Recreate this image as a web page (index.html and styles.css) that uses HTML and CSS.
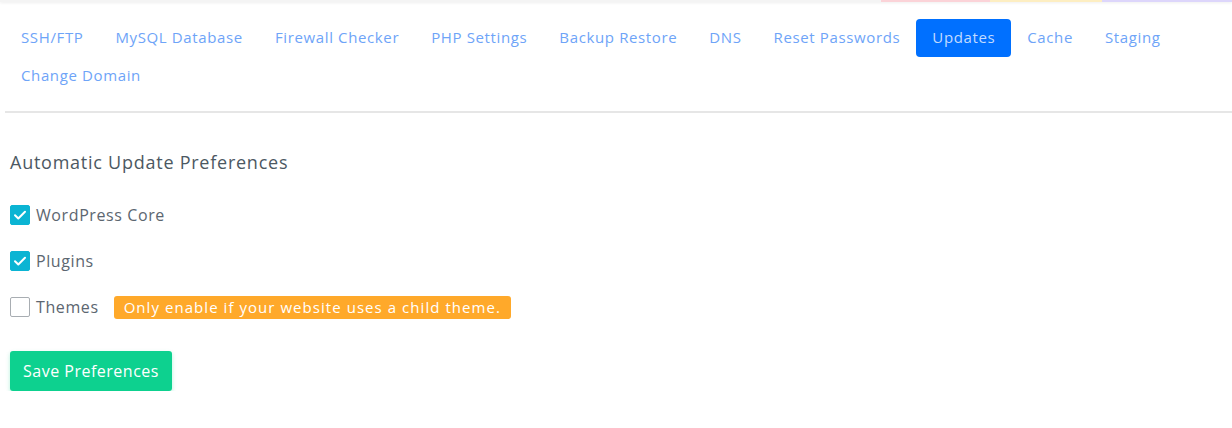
FILE: index.html
```html
<!DOCTYPE html>
<html>
<head>
<meta charset="utf-8">
<link rel="stylesheet" href="styles.css">
</head>
<body>
<div class="topbar">
  <span class="seg pink"></span><span class="seg yellow"></span><span class="seg purple"></span>
</div>
<div class="wrap">
  <nav class="tabs">
    <a class="tab">SSH/FTP</a>
    <a class="tab">MySQL Database</a>
    <a class="tab">Firewall Checker</a>
    <a class="tab">PHP Settings</a>
    <a class="tab">Backup Restore</a>
    <a class="tab">DNS</a>
    <a class="tab">Reset Passwords</a>
    <a class="tab active">Updates</a>
    <a class="tab">Cache</a>
    <a class="tab">Staging</a>
    <a class="tab">Change Domain</a>
  </nav>
  <section class="panel">
    <h2 class="title">Automatic Update Preferences</h2>
    <label class="row">
      <span class="box checked"><svg viewBox="0 0 20 20" width="20" height="20"><path d="M5 10.2l3.3 3.3L15 6.8" fill="none" stroke="#fff" stroke-width="2" stroke-linecap="round" stroke-linejoin="round"/></svg></span>
      <span class="lbl">WordPress Core</span>
    </label>
    <label class="row">
      <span class="box checked"><svg viewBox="0 0 20 20" width="20" height="20"><path d="M5 10.2l3.3 3.3L15 6.8" fill="none" stroke="#fff" stroke-width="2" stroke-linecap="round" stroke-linejoin="round"/></svg></span>
      <span class="lbl">Plugins</span>
    </label>
    <label class="row">
      <span class="box"></span>
      <span class="lbl">Themes</span>
      <span class="badge">Only enable if your website uses a child theme.</span>
    </label>
    <button class="save">Save Preferences</button>
  </section>
</div>
</body>
</html>
```

FILE: styles.css
```css
html, body {
  margin: 0;
  padding: 0;
  background: #fff;
  font-family: "Open Sans", "Noto Sans", sans-serif;
}
.topbar {
  height: 2px;
  display: flex;
  justify-content: flex-end;
  box-shadow: 0 1px 3px rgba(0,0,0,0.08);
  background: #f4f4f4;
}
.seg { height: 2px; display: block; }
.pink { width: 109px; background: #fbd3d8; }
.yellow { width: 112px; background: #fdeec2; }
.purple { width: 130px; background: #ddd6fb; }
.wrap {
  padding: 17px 0 0 5px;
}
.tabs {
  display: flex;
  flex-wrap: wrap;
  padding-bottom: 16px;
  border-bottom: 2px solid #e6e6e6;
}
.tab {
  display: block;
  padding: 7px 16px 9px;
  font-size: 15px;
  line-height: 22px;
  color: #6ea4f8;
  letter-spacing: 0.63px;
  border-radius: 4px;
}
.tab.active {
  background: #0070ff;
  color: #c2dbff;
}
.panel {
  padding: 36px 5px 0;
}
.title {
  margin: 0 0 28px;
  font-weight: 400;
  font-size: 18px;
  line-height: 26px;
  color: #4c5862;
  letter-spacing: 0.75px;
}
.row {
  display: flex;
  align-items: center;
  height: 24px;
  margin-bottom: 22px;
}
.box {
  width: 20px;
  height: 20px;
  box-sizing: border-box;
  border: 1px solid #a8adb2;
  border-radius: 2px;
  margin-right: 6px;
  display: flex;
}
.box.checked {
  background: #0bb4d3;
  border-color: #0bb4d3;
}
.box svg { margin: -1px; }
.lbl {
  font-size: 16px;
  color: #5c6670;
  letter-spacing: 0.6px;
}
.badge {
  margin-left: 15px;
  background: #ffa92a;
  color: #fff;
  font-size: 15px;
  line-height: 23px;
  padding: 0 10px;
  border-radius: 3px;
  letter-spacing: 1.05px;
}
.save {
  margin-top: 10px;
  background: #0dd18f;
  color: #fff;
  border: none;
  border-radius: 3px;
  font-family: inherit;
  font-size: 16px;
  letter-spacing: 0.5px;
  height: 40px;
  padding: 0 13px;
  box-shadow: 0 2px 4px rgba(13,209,143,0.3);
}
```
